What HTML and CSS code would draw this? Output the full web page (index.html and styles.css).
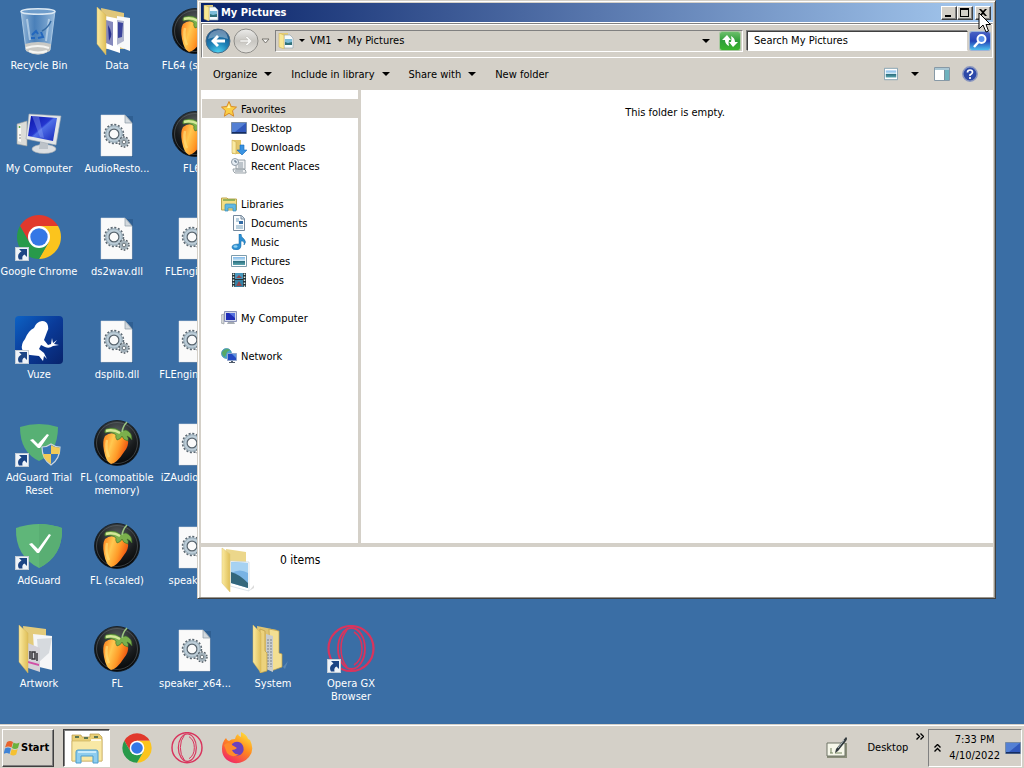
FILE: index.html
```html
<!DOCTYPE html>
<html lang="en">
<head>
<meta charset="utf-8">
<title>My Pictures</title>
<link rel="stylesheet" href="styles.css">
</head>
<body>
<svg class="sprite" aria-hidden="true">
  <defs>
    <linearGradient id="g-folder" x1="0" x2="1"><stop offset="0" stop-color="#fbeaa0"/><stop offset="1" stop-color="#dfbf58"/></linearGradient>
    <linearGradient id="g-screen" x1="0" y1="0" x2="1" y2="1"><stop offset="0" stop-color="#0a12a8"/><stop offset=".45" stop-color="#2436cf"/><stop offset=".5" stop-color="#4f6fe8"/><stop offset="1" stop-color="#1424b8"/></linearGradient>
    <linearGradient id="g-glass" x1="0" x2="1"><stop offset="0" stop-color="#b9d3ea" stop-opacity=".75"/><stop offset=".4" stop-color="#5a92cd" stop-opacity=".5"/><stop offset="1" stop-color="#b9d6ef" stop-opacity=".75"/></linearGradient>
    <radialGradient id="g-black" cx=".5" cy=".25" r=".75"><stop offset="0" stop-color="#555b5e"/><stop offset=".6" stop-color="#191c1e"/><stop offset="1" stop-color="#050607"/></radialGradient>
    <linearGradient id="g-mango" x1="0" y1="0" x2="1" y2=".4"><stop offset="0" stop-color="#ff7a18"/><stop offset=".4" stop-color="#ffc850"/><stop offset=".7" stop-color="#ff9a28"/><stop offset="1" stop-color="#ee5410"/></linearGradient>
    <linearGradient id="g-vuze" x1="0" y1="0" x2="1" y2="1"><stop offset="0" stop-color="#0d62c4"/><stop offset=".5" stop-color="#0a3a98"/><stop offset="1" stop-color="#08246c"/></linearGradient>
    <linearGradient id="g-fox" x1=".8" y1="0" x2=".2" y2="1"><stop offset="0" stop-color="#ffe23c"/><stop offset=".45" stop-color="#ff8a1e"/><stop offset="1" stop-color="#f0206a"/></linearGradient>
    <linearGradient id="g-pic" x1="0" y1="0" x2="0" y2="1"><stop offset="0" stop-color="#7fb8ea"/><stop offset=".5" stop-color="#d8eef6"/><stop offset=".55" stop-color="#2d7080"/><stop offset="1" stop-color="#5ba6b0"/></linearGradient>
    <radialGradient id="g-back" cx=".5" cy="1" r=".9"><stop offset="0" stop-color="#4fd6f4"/><stop offset=".5" stop-color="#1d82b8"/><stop offset="1" stop-color="#174f86"/></radialGradient>
    <linearGradient id="g-fwd" x1="0" y1="0" x2="0" y2="1"><stop offset="0" stop-color="#ececea"/><stop offset=".5" stop-color="#c8c6c1"/><stop offset="1" stop-color="#e6e4df"/></linearGradient>
  </defs>
  <symbol id="shortcut" viewBox="0 0 14 14">
    <rect width="14" height="14" fill="#eef3f8"/><rect x=".5" y=".5" width="13" height="13" fill="none" stroke="#c2ccd6"/>
    <path d="M4 2h8v8L9.500 7.500C7.500 8.500 7 10 7.500 12.500H4C2 9 3.500 6 6.500 4.500z" fill="#1c4584"/>
  </symbol>
  <symbol id="bin" viewBox="0 0 48 48">
    <path d="M6 4l5 39q12 8 24 0l5-39z" fill="url(#g-glass)" stroke="#a9c8e4"/>
    <path d="M10 37l1 7q12 7 24 0l1-7q-13-4-26 0z" fill="#c9c9c5"/><path d="M11 41q12-4 23 0M14 44q9 3 18 0" stroke="#f5f5f2" stroke-width="2" fill="none"/>
    <ellipse cx="23" cy="4.500" rx="17" ry="2.800" fill="#6f9dcb" stroke="#dbe8f3" stroke-width="1.500"/>
    <path d="M17 28l4-4 2 3M26 25l2 5-5 1M20 31h-4" fill="none" stroke="#2367bd" stroke-width="2"/>
    <path d="M12 12l3 21M34 12l-3 22" stroke="#d3e5f4" stroke-width="2" opacity=".6"/><path d="M27 24q6-3 9-10" stroke="#356ba4" fill="none" stroke-width="1.500"/>
  </symbol>
  <symbol id="folder-data" viewBox="0 0 48 48">
    <path d="M8 1l23 5v36H12z" fill="#dfc67a"/><path d="M12 9l15 3v34l-15-5z" fill="#fff"/><path d="M13 13l7 2v24l-7-3z" fill="#8589bd"/><path d="M15 18q6 9 1 16z" fill="#27308e"/>
    <path d="M24 9l13 2v33l-13-5z" fill="#f8f9fa"/><path d="M24 13l7 1v20l-7 4z" fill="#b2b7cf"/><path d="M25 15l5 1-1 14-4 1z" fill="#3b449c"/><path d="M4 0l9 8v40l-9-11z" fill="url(#g-folder)" stroke="#d4b65c" stroke-width=".5"/>
  </symbol>
  <symbol id="folder-art" viewBox="0 0 48 48">
    <path d="M8 1l23 3v38H12z" fill="#e3cb7b"/><path d="M18 9l19 2v34l-17-4z" fill="#f5f6f7"/><path d="M22 14l15-1-3 15-10 9z" fill="#d6dade"/>
    <path d="M13 18l12 5v24l-12-4z" fill="#d5d2d8"/><path d="M15 26v8M17 27h3v7h-3zM22 28v8" stroke="#38343a" stroke-width="1.500" fill="none"/><path d="M13 36l11 3v2l-11-3z" fill="#d14fa6"/>
    <path d="M4 0l9 8v40l-9-11z" fill="url(#g-folder)" stroke="#d4b65c" stroke-width=".5"/>
  </symbol>
  <symbol id="folder-sys" viewBox="0 0 48 48">
    <path d="M8 1l20 4v36H10z" fill="#dfc573"/><path d="M20 4l10 2v22l3 1v13l-11 4z" fill="#f3df92" stroke="#bfa04a" stroke-width=".7"/><path d="M17 9l7 2v36l-7-3z" fill="#c8ccce"/><path d="M19 14v28M22 14v28" stroke="#78828e" stroke-dasharray="2 1"/>
    <path d="M11 4l5 2v20l2 2v18l-7 2z" fill="#ecd27c" stroke="#bb9c46" stroke-width=".7"/><path d="M4 0l8 8v40l-8-11z" fill="url(#g-folder)" stroke="#d4b65c" stroke-width=".5"/><path d="M34 42l5-6-3 8z" fill="#77a0c6" opacity=".5"/>
  </symbol>
  <symbol id="computer" viewBox="0 0 48 48">
    <path d="M2 14l10-3v25L2 34z" fill="#dcdcd8" stroke="#9b9d9c" stroke-width=".6"/><path d="M3 16l3-1v17l-3-1z" fill="#f8f8f5"/><circle cx="4.500" cy="17" r="1" fill="#54a03c"/><path d="M4 25h2M4 28h2" stroke="#888"/>
    <ellipse cx="29" cy="39" rx="12" ry="4.500" fill="#dcdfe2" stroke="#a3a9af" stroke-width=".6"/><path d="M25 32h8v7h-9z" fill="#bdc3c9"/>
    <path d="M14 4l32 2-5 29-30-6z" fill="#e3e6e8" stroke="#a0a8b0" stroke-width=".6"/><path d="M16 6l26 2-4 23-25-5z" fill="url(#g-screen)"/><path d="M17 6l7 1 5 21-4-1z" fill="#8ba4f2" opacity=".4"/>
  </symbol>
  <symbol id="dll" viewBox="0 0 48 48">
    <path d="M9 6h31v41H9z" fill="#1e4670" opacity=".35"/><path d="M8 5h24l7 8v33H8z" fill="#fafafa" stroke="#dde2e6" stroke-width=".5"/><path d="M32 5v8h7z" fill="#d3d9de" stroke="#8b98a4" stroke-width=".7"/>
    <g fill="none"><circle cx="21" cy="24" r="9" stroke="#5d6973" stroke-width="2.500" stroke-dasharray="2 1.530"/><circle cx="21" cy="24" r="7" stroke="#bccdd8" stroke-width="3.500"/><circle cx="21" cy="24" r="4.900" stroke="#56636d" stroke-width="1.200"/><circle cx="21" cy="24" r="8.200" stroke="#8a9da9" stroke-width=".7"/>
    <circle cx="31" cy="32" r="4.700" stroke="#4b555d" stroke-width="2" stroke-dasharray="1.600 1.350"/><circle cx="31" cy="32" r="3.200" stroke="#a4b2bb" stroke-width="2.600"/><circle cx="31" cy="32" r="1.800" stroke="#4e5961" stroke-width=".8"/></g>
  </symbol>
  <symbol id="chrome" viewBox="0 0 48 48">
    <path d="M4.950 13A22 22 0 0 1 43.050 13H24v11l-9.530 5.500z" fill="#e1392c"/>
    <path d="M4.950 13A22 22 0 0 1 43.050 13H24v11l-9.530 5.500z" fill="#fbc41d" transform="rotate(120 24 24)"/>
    <path d="M4.950 13A22 22 0 0 1 43.050 13H24v11l-9.530 5.500z" fill="#289a4a" transform="rotate(240 24 24)"/>
    <circle cx="24" cy="24" r="11" fill="#fff"/><circle cx="24" cy="24" r="8.700" fill="#3477e6"/>
  </symbol>
  <symbol id="vuze" viewBox="0 0 48 48">
    <rect width="48" height="48" rx="4" fill="url(#g-vuze)"/>
    <path d="M19 12q2-6 8-7 5 0 6 5 1 3-1 6l-3 8 4 5 3-1 1-6 1 5 4-3-3 4 5 1-6 1q-4 3-8 1l-4-2-2 4 5 4 3 6-3-3-1 5-4-5-9-1q-6-1-8-6-1-5 3-10 3-8 9-11z" fill="#fff"/>
  </symbol>
  <symbol id="fl" viewBox="0 0 48 48">
    <circle cx="24" cy="24" r="22.500" fill="url(#g-black)" stroke="#10161a" stroke-width=".8"/><circle cx="24" cy="24" r="20.500" fill="none" stroke="#6a7276" stroke-width=".7" opacity=".7"/>
    <path d="M12 17q6-5 13-1 8-2 10 5 1 6-4 12-7 11-13 12-5-2-7-13-2-10 1-15z" fill="url(#g-mango)"/><path d="M14 21q-2 9 2 17" stroke="#ffdc75" stroke-width="2.500" fill="none" opacity=".7"/>
    <path d="M28 13Q22 7 13 10q-2 2-1 4 7-2 11 2-1 2 1 5 4-1 5-4 1 4 6 5 1-3-1-5 3 1 5 4 0-8-6-10-3 0-5 2z" fill="#7bb04c" stroke="#3d6b2a" stroke-width=".6"/>
    <path d="M13 12q7-2 14 2" stroke="#d5e89a" stroke-width="2.500" fill="none"/><path d="M29 13q1-6 5-10" fill="none" stroke="#9ac580" stroke-width="1.600"/>
  </symbol>
  <symbol id="adguard" viewBox="0 0 48 48">
    <path d="M24 2Q35 2 47 6q1 28-23 40Q0 34 1 6 13 2 24 2z" fill="#5fb679"/><path d="M24 2Q35 2 47 6q1 28-23 40z" fill="#59ae73"/><path d="M14 22l3-1 6 6L34 12l2 1-12 18h-2z" fill="#fff"/>
  </symbol>
  <symbol id="adguard-reset" viewBox="0 0 48 48">
    <path d="M24 5q10 0 19 3 0 25-19 34Q5 33 5 8q9-3 19-3z" fill="#57b074"/><path d="M15 21l3-1 5 5 9-10 2 1-9 13h-2z" fill="#fff"/>
    <path d="M36 25q4 3 9 3 0 12-9 18-9-6-9-18 5 0 9-3z" fill="#3a76b8" stroke="#ced7e0" stroke-width="1.200"/><path d="M36 26v9h8.500q.5-4 .2-6.500-5 0-8.700-2.500zM36 35h-8q1 6 8 10z" fill="#f3ca57"/>
  </symbol>
  <symbol id="opera" viewBox="0 0 48 48">
    <g fill="none" stroke="#d9345d"><circle cx="24" cy="23.500" r="22.500" stroke-width="2.200"/><ellipse cx="24.500" cy="23.500" rx="13.500" ry="20.500" stroke-width="1.800"/><path d="M27 7q8 5 8 16.500T27 40" stroke-width="1.500"/><path d="M20 5q-6 7-6 18.500T20 42" stroke-width="1.500"/></g>
  </symbol>
  <symbol id="firefox" viewBox="0 0 32 32">
    <path d="M5 6q1 3 3 3 2-2 6-2 0-3 3-5 0 2 3 3V0q6 3 7 7l2 1q5 10-1 17-6 7-15 6Q1 28 1 17 1 10 5 6z" fill="url(#g-fox)"/><path d="M11 12q4-4 9-1 4 4 2 9-3 5-8 3-4-2-4-6l5-1-4-2z" fill="#6b42bd"/><path d="M3 13q4-4 8 0l5 3q-2 2-5 2 2 5 7 4-7 5-12-1z" fill="#ff8b2a"/>
  </symbol>
  <symbol id="explorer" viewBox="0 0 32 32">
    <path d="M1 6V3h9l1 2h8V2h9l3 3v24H1z" fill="#e9cf77" stroke="#b89a48" stroke-width=".7"/><path d="M4 5h4M13 6h4M23 5h4" stroke="#5b7551" stroke-width="2" fill="none"/><path d="M1 9h18l2-2h10v22H1z" fill="#f8e8a5" stroke="#ccb05c" stroke-width=".7"/><path d="M20 7h10v2H20z" fill="#fff" opacity=".8"/>
    <path d="M5 20q0-2 2-2h18q2 0 2 2v11h-5v-7H10v7H5z" fill="#8dcdef" stroke="#4b9ccc"/><path d="M7 20h18" stroke="#ddf4ff" stroke-width="1.500"/>
  </symbol>
  <symbol id="pics" viewBox="0 0 16 16"><path d="M2 0h8v14H2z" fill="#e6cd73"/><path d="M6 2h6l3 3v10H6z" fill="#f6fafc" stroke="#99a9b1" stroke-width=".7"/><path d="M7 6h7v6H7z" fill="#7cbcd8"/><path d="M7 9l3 1 4-1v3H7z" fill="#2f7078"/><path d="M1 0l5 2v14l-5-2z" fill="#f9e895" stroke="#c8aa50" stroke-width=".5"/></symbol>
  <symbol id="star" viewBox="0 0 16 16"><path d="M8 .5l2.200 5 5.300.6-4 3.600 1.200 5.500L8 12.300l-4.700 2.900L4.500 9.700.5 6.100l5.300-.6z" fill="#fbcf45" stroke="#d88b28"/><path d="M8 3l1.500 4H6z" fill="#fff3ad"/></symbol>
  <symbol id="desk" viewBox="0 0 16 16"><path d="M.5 2.500h15v11H.5z" fill="#3158bb" stroke="#788ba4"/><path d="M1 3h14L4 12H1z" fill="#5480d4"/><path d="M1 12h14v1.500H1z" fill="#152d62"/></symbol>
  <symbol id="down" viewBox="0 0 16 16"><path d="M1 1h9v14H1z" fill="#e3c66a"/><path d="M1 1l4 2v12l-4-1z" fill="#faeaa1" stroke="#cbad54" stroke-width=".6"/><path d="M9 6h4v5h3l-5 5-5-5h3z" fill="#3a93e2" stroke="#196bba" stroke-width=".6"/></symbol>
  <symbol id="recent" viewBox="0 0 16 16"><path d="M5 2h9v9H5zM2 11h10q3 0 3 3v1H4q-2-1-2-4z" fill="#eef0f2" stroke="#8f989f" stroke-width=".9"/><path d="M7 5h5M7 7h5M7 9h5M4 13h8" stroke="#8b98a2"/><circle cx="4" cy="4" r="3.500" fill="#e6edf3" stroke="#909ba7"/><path d="M4 2v2h2" stroke="#53687c" fill="none"/></symbol>
  <symbol id="lib" viewBox="0 0 16 16"><path d="M.5 14V2H6l1 1h8.500v11z" fill="#f4df85" stroke="#bca650"/><path d="M2 4h12" stroke="#7ca34c" stroke-width="1.500"/><path d="M4 15V9q0-1 1-1h8q2 0 2 1v6h-3v-3H7v3z" fill="#61b8e2" stroke="#3a8cb8" stroke-width=".7"/></symbol>
  <symbol id="doc" viewBox="0 0 16 16"><path d="M2.500.5h8l3 3v12h-11z" fill="#fbfcfd" stroke="#75889b"/><path d="M10 .5V4h3.500" fill="#d7e0e8" stroke="#75889b"/><path d="M5 4h3M5 6h3M5 11h7M5 13h7" stroke="#75a0bc"/><path d="M8 6h4v3H8z" fill="#346ca5"/></symbol>
  <symbol id="music" viewBox="0 0 16 16"><path d="M8 0h2q0 3 3 5 3 3 0 6 1-4-3-4v5q0 3-4 4-5 0-5-3t7-3z" fill="#2c8fd2" stroke="#1768a4" stroke-width=".5"/><ellipse cx="4.500" cy="12.500" rx="2" ry="1.200" fill="#8fd0f2"/></symbol>
  <symbol id="picture" viewBox="0 0 16 16"><path d="M.5 2.500h15v11H.5z" fill="#fff" stroke="#7c9cad"/><path d="M2 4h12v8H2z" fill="url(#g-pic)"/></symbol>
  <symbol id="video" viewBox="0 0 16 16"><path d="M1 1h14v14H1z" fill="#263238"/><path d="M4 1h8v6H4z" fill="#4998be"/><path d="M4 8h8v7H4z" fill="#3482a6"/><path d="M8 3l3 3H5zM8 9l3 5H5z" fill="#93474d"/><path d="M2.500 1.500v14M13.500 1.500v14" stroke="#d6eee9" stroke-width="1.500" stroke-dasharray="1.500 1.500"/></symbol>
  <symbol id="pc" viewBox="0 0 16 16"><path d="M0 5l3-1v10l-3-1z" fill="#d4d7da" stroke="#8b9197" stroke-width=".6"/><path d="M7 12h6l1 2H6z" fill="#a7adb4"/><path d="M3.500 1.500h12v10h-12z" fill="#d5daea" stroke="#8b93b8"/><path d="M5 3h9v7H5z" fill="#1e2cb8"/><path d="M8 3h6v5z" fill="#5370df"/></symbol>
  <symbol id="net" viewBox="0 0 16 16"><circle cx="5.500" cy="5.500" r="5" fill="#48a6cd" stroke="#2b7c9c" stroke-width=".6"/><path d="M1 4q4-5 8-2L6 4l-2 5Q1 8 1 4z" fill="#58a965"/><path d="M6.500 5.500h9v7h-9z" fill="#2349c2" stroke="#91a5cd"/><path d="M10 13h2v1h2v1H8v-1h2z" fill="#4e5a6a"/><path d="M11 6h4v4z" fill="#5a90e2"/></symbol>
</svg>

<main class="desktop">
  <div class="icons">
    <button class="item"><svg class="pic"><use href="#bin"/></svg><span>Recycle Bin</span></button>
    <button class="item"><svg class="pic"><use href="#computer"/></svg><span>My Computer</span></button>
    <button class="item"><svg class="pic"><use href="#chrome"/><use href="#shortcut" y="34" width="14" height="14"/></svg><span>Google Chrome</span></button>
    <button class="item"><svg class="pic"><use href="#vuze"/><use href="#shortcut" y="34" width="14" height="14"/></svg><span>Vuze</span></button>
    <button class="item"><svg class="pic"><use href="#adguard-reset"/><use href="#shortcut" y="34" width="14" height="14"/></svg><span>AdGuard Trial Reset</span></button>
    <button class="item"><svg class="pic"><use href="#adguard"/><use href="#shortcut" y="34" width="14" height="14"/></svg><span>AdGuard</span></button>
    <button class="item"><svg class="pic"><use href="#folder-art"/></svg><span>Artwork</span></button>
    <button class="item"><svg class="pic"><use href="#folder-data"/></svg><span>Data</span></button>
    <button class="item"><svg class="pic"><use href="#dll"/></svg><span>AudioResto...</span></button>
    <button class="item"><svg class="pic"><use href="#dll"/></svg><span>ds2wav.dll</span></button>
    <button class="item"><svg class="pic"><use href="#dll"/></svg><span>dsplib.dll</span></button>
    <button class="item"><svg class="pic"><use href="#fl"/></svg><span>FL (compatible memory)</span></button>
    <button class="item"><svg class="pic"><use href="#fl"/></svg><span>FL (scaled)</span></button>
    <button class="item"><svg class="pic"><use href="#fl"/></svg><span>FL</span></button>
    <button class="item"><svg class="pic"><use href="#fl"/></svg><span>FL64 (scaled)</span></button>
    <button class="item"><svg class="pic"><use href="#fl"/></svg><span>FL64</span></button>
    <button class="item"><svg class="pic"><use href="#dll"/></svg><span>FLEngine.dll</span></button>
    <button class="item"><svg class="pic"><use href="#dll"/></svg><span>FLEngine_x6...</span></button>
    <button class="item"><svg class="pic"><use href="#dll"/></svg><span>iZAudioRest...</span></button>
    <button class="item"><svg class="pic"><use href="#dll"/></svg><span>speaker.dll</span></button>
    <button class="item"><svg class="pic"><use href="#dll"/></svg><span>speaker_x64...</span></button>
    <button class="item last-row"><svg class="pic"><use href="#folder-sys"/></svg><span>System</span></button>
    <button class="item last-row"><svg class="pic"><use href="#opera"/><use href="#shortcut" y="34" width="14" height="14"/></svg><span>Opera GX Browser</span></button>
  </div>

  <section class="window">
    <header class="titlebar">
      <svg class="i16"><use href="#pics"/></svg>
      <h1>My Pictures</h1>
      <button class="winbtn" aria-label="Minimize"><svg viewBox="0 0 12 10"><path d="M2 7h6v2H2z"/></svg></button>
      <button class="winbtn" aria-label="Maximize"><svg viewBox="0 0 12 10"><path d="M1 0h9v9H1zM2 2v6h7V2z" fill-rule="evenodd"/></svg></button>
      <button class="winbtn close" aria-label="Close"><svg viewBox="0 0 12 10"><path d="M2 1h2l2 2 2-2h2L7 4.500 10 8H8L6 6 4 8H2l3-3.500z"/></svg></button>
    </header>

    <div class="navbar">
      <button class="round" aria-label="Back"><svg viewBox="0 0 26 26"><circle cx="13" cy="13" r="12" fill="url(#g-back)" stroke="#4b6c86"/><path d="M3 11Q4 3 13 2t10 9q-10-4-20 0z" fill="#fff" opacity=".35"/><path d="M12 7l-6 6 6 6 2-2-2.500-2.500H20v-3h-8.500L14 9z" fill="#fff"/></svg></button>
      <button class="round" aria-label="Forward"><svg viewBox="0 0 26 26"><circle cx="13" cy="13" r="12" fill="url(#g-fwd)" stroke="#8f8e8a"/><path d="M14 8l5 5-5 5-1.500-1.500 2.500-2.500H7v-2h8L12.500 9.500z" fill="#f6f6f4" stroke="#b9b7b2" stroke-width=".5"/></svg></button>
      <button class="history" aria-label="Recent pages"><svg viewBox="0 0 9 6"><path d="M1 1h7L4.500 5z" fill="#f4f3f0" stroke="#77756f"/></svg></button>
      <div class="address">
        <svg class="i16"><use href="#pics"/></svg>
        <i class="small-arrow root"></i>
        <button class="crumb">VM1</button>
        <i class="small-arrow"></i>
        <button class="crumb">My Pictures</button>
        <button class="drop" aria-label="Previous locations"><i class="arrow"></i></button>
        <button class="refresh" aria-label="Refresh"><svg viewBox="0 0 20 18"><path d="M7 3L2 8h3q0 4 4 6-1-3 0-6h2zM13 15l5-5h-3q0-4-4-6 1 3 0 6H9z" fill="#fff"/></svg></button>
      </div>
      <input class="search" type="text" aria-label="Search My Pictures" value="Search My Pictures">
      <button class="go" aria-label="Search"><svg viewBox="0 0 20 18"><circle cx="11.500" cy="7" r="4" fill="#5b91e8" stroke="#fff" stroke-width="2"/><path d="M8.500 10L4 15" stroke="#fff" stroke-width="2.500"/></svg></button>
    </div>

    <nav class="toolbar">
      <button>Organize<i class="arrow"></i></button>
      <button>Include in library<i class="arrow"></i></button>
      <button>Share with<i class="arrow"></i></button>
      <button class="grow">New folder</button>
      <button class="view" aria-label="Change view"><svg class="i14" viewBox="0 0 16 16"><path d="M.5 1.500h15v13H.5z" fill="#fff" stroke="#7c9cad"/><path d="M2 4h12v8H2z" fill="url(#g-pic)"/></svg><i class="arrow"></i></button>
      <button aria-label="Preview pane"><svg class="i16" viewBox="0 0 16 16"><path d="M.5 1.500h15v13H.5z" fill="#fff" stroke="#8799a6"/><path d="M1 2h14v2H1z" fill="#aac7d4"/><path d="M11 4h4v10h-4z" fill="#6fb2be"/><path d="M10.500 4v10" stroke="#7c929e"/></svg></button>
      <button aria-label="Help"><svg class="i16" viewBox="0 0 16 16"><circle cx="8" cy="8" r="7.200" fill="#2c48a8" stroke="#8b97bf" stroke-width="1.500"/><path d="M5.500 6.500Q5.500 4 8 4t2.500 2.200Q10.500 7.500 8 9v1M8 11v2" fill="none" stroke="#fff" stroke-width="1.700"/></svg></button>
    </nav>

    <div class="body">
      <aside class="tree">
        <div class="group">
          <a class="head selected" href="#"><svg class="i16"><use href="#star"/></svg>Favorites</a>
          <a href="#"><svg class="i16"><use href="#desk"/></svg>Desktop</a>
          <a href="#"><svg class="i16"><use href="#down"/></svg>Downloads</a>
          <a href="#"><svg class="i16"><use href="#recent"/></svg>Recent Places</a>
        </div>
        <div class="group">
          <a class="head" href="#"><svg class="i16"><use href="#lib"/></svg>Libraries</a>
          <a href="#"><svg class="i16"><use href="#doc"/></svg>Documents</a>
          <a href="#"><svg class="i16"><use href="#music"/></svg>Music</a>
          <a href="#"><svg class="i16"><use href="#picture"/></svg>Pictures</a>
          <a href="#"><svg class="i16"><use href="#video"/></svg>Videos</a>
        </div>
        <div class="group"><a class="head" href="#"><svg class="i16"><use href="#pc"/></svg>My Computer</a></div>
        <div class="group"><a class="head" href="#"><svg class="i16"><use href="#net"/></svg>Network</a></div>
      </aside>
      <div class="files"><p>This folder is empty.</p></div>
    </div>

    <footer class="details">
      <svg class="thumb" viewBox="0 0 36 46"><path d="M6 2l20 3v33H8z" fill="#ecd78b"/><path d="M10 14l19 1v29l-19-5z" fill="#fff" stroke="#c3d2dc" stroke-width=".6"/><path d="M11 15l17 1v25l-17-5z" fill="#79b3e4"/><path d="M11 15l17 1v10q-8-5-17 0z" fill="#a7d2f2"/><path d="M11 25q8 2 17 11v5l-17-5z" fill="#33667b"/><path d="M29 44l5-6v3z" fill="#ddd"/><path d="M2 1l8 6v38l-8-9z" fill="url(#g-folder)" stroke="#e1c979" stroke-width=".6"/></svg>
      <p>0 items</p>
    </footer>
  </section>

  <svg class="cursor" viewBox="0 0 13 21"><path d="M1 1v16l4-4 3 7 2.500-1L8 12.500h4.500z" fill="#fff" stroke="#000"/></svg>
</main>

<footer class="taskbar">
  <button class="start"><svg viewBox="0 0 16 16"><path d="M3 2q3-2 6 0L7.500 7.500Q4 5.500 1 7.500z" fill="#e8632c"/><path d="M9.500 2.500q3 2 6 0L14 8q-3 2-6 0z" fill="#6bb23c"/><path d="M1 8.500q3-2 6 0L5.500 14q-3-2-6 0z" fill="#3f83d6"/><path d="M7.700 9q3 2 6 0l-1.500 5.500q-3 2-6 0z" fill="#f5c131"/></svg>Start</button>
  <button class="task active" aria-label="Windows Explorer"><svg><use href="#explorer"/></svg></button>
  <button class="task" aria-label="Google Chrome"><svg><use href="#chrome"/></svg></button>
  <button class="task" aria-label="Opera GX"><svg><use href="#opera"/></svg></button>
  <button class="task" aria-label="Firefox"><svg><use href="#firefox"/></svg></button>
  <button class="pen" aria-label="Input panel"><svg viewBox="0 0 22 22"><path d="M1 6h20v15H1z" fill="#8b8f7a"/><path d="M1 6h18v13H1z" fill="#f6f7ea" stroke="#6e7466"/><path d="M4 16h3M5 11v5M9 16h7" stroke="#75865f"/><path d="M20 0q2 1 0 4l-8 10-3 2 1-4z" fill="#30383c"/><path d="M18 3l-6 8" stroke="#b8c3c6"/></svg></button>
  <button class="deskband">Desktop</button>
  <button class="more" aria-label="More"><svg viewBox="0 0 8 7"><path d="M.5 .5l3 3-3 3M4.500 .5l3 3-3 3" fill="none" stroke="#000" stroke-width="1.400"/></svg></button>
  <div class="tray">
    <button aria-label="Show hidden icons"><svg class="up" viewBox="0 0 7 8"><path d="M.5 3.500l3-3 3 3M.5 7.500l3-3 3 3" fill="none" stroke="#000" stroke-width="1.400"/></svg></button>
    <time>7:33 PM<br>4/10/2022</time>
    <svg class="i16"><use href="#desk"/></svg>
  </div>
</footer>
</body>
</html>
```

FILE: styles.css
```css
* { box-sizing: border-box; }

body {
  margin: 0;
  height: 100vh;
  overflow: hidden;
  display: flex;
  flex-direction: column;
  background: #3a6ea5;
  color: #000;
  font: 11px/13px "DejaVu Sans Condensed", Tahoma, "DejaVu Sans", sans-serif;
}

button {
  margin: 0;
  padding: 0;
  border: 0;
  background: none;
  color: inherit;
  font: inherit;
}

svg { display: block; flex: none; }
p, h1 { margin: 0; }
.sprite { position: absolute; width: 0; height: 0; }
.i16 { width: 16px; height: 16px; }
.i14 { width: 14px; height: 14px; }

.arrow {
  display: block;
  border: 4px solid transparent;
  border-top-color: #000;
  border-bottom: 0;
}
.small-arrow {
  border: 3px solid transparent;
  border-top-color: #000;
  border-bottom: 0;
}

/* Desktop */
.desktop { position: relative; flex: 1; min-height: 0; }

.icons {
  display: grid;
  grid-auto-flow: column;
  grid-template-rows: repeat(7, 103px);
  grid-auto-columns: 78px;
}
.item {
  display: flex;
  flex-direction: column;
  align-items: center;
  gap: 4px;
  padding-top: 7px;
  color: #fff;
  text-align: center;
}
.last-row { grid-row: 7; }
.pic { width: 48px; height: 48px; }

/* Explorer window */
.window {
  position: absolute;
  top: 0;
  left: 197px;
  right: 28px;
  bottom: 125px;
  display: flex;
  flex-direction: column;
  padding: 2px 1px 1px 2px;
  background: #d4d0c8;
  border: 1px solid #d4d0c8;
  border-right-color: #404040;
  border-bottom-color: #404040;
  box-shadow: inset 1px 1px #fff, inset -1px -1px #9a978f;
}

.titlebar {
  display: flex;
  align-items: center;
  height: 19px;
  margin: 0 1px;
  padding: 0 2px;
  background: linear-gradient(90deg, #0a246a, #a6caf0);
  color: #fff;
}
.titlebar h1 { flex: 1; padding-left: 2px; font-size: 11px; line-height: 13px; }

.winbtn {
  width: 16px;
  height: 14px;
  padding: 1px;
  background: #d4d0c8;
  border: 1px solid;
  border-color: #fff #404040 #404040 #fff;
  box-shadow: inset -1px -1px #808080;
}
.winbtn svg { width: 12px; height: 10px; }
.close { margin-left: 2px; }

.navbar {
  display: flex;
  align-items: center;
  height: 35px;
  margin: 1px 1px 0;
  padding: 0 2px 0 3px;
  border: 1px solid;
  border-color: #808080 #fff #fff #808080;
  box-shadow: inset 1px 1px #fff, 0 -1px #fff;
}
.round { width: 26px; height: 26px; margin-right: 2px; }
.round svg { width: 26px; height: 26px; }
.history { width: 9px; margin-right: 5px; }
.history svg { width: 9px; height: 6px; }

.address {
  flex: 1;
  min-width: 0;
  display: flex;
  align-items: center;
  height: 22px;
  margin-right: 4px;
  padding: 0 2px;
  border: 1px solid;
  border-color: #808080 #fff #fff #808080;
}
.root { margin-left: 5px; }
.crumb { padding: 0 5px; white-space: nowrap; }
.drop { margin-left: auto; padding: 8px 10px; }
.refresh, .go {
  width: 20px;
  height: 18px;
  border-radius: 2px;
}
.refresh { background: linear-gradient(#6cbf6c, #2e9e38 50%, #38b52c); box-shadow: 0 0 0 1px #a8c8a0; }
.go { background: linear-gradient(#4a62c4, #2444b8 50%, #4cc0ee); box-shadow: 0 0 0 1px #9db4d8; }
.refresh svg, .go svg { width: 20px; height: 18px; }

.search {
  width: 221px;
  height: 20px;
  margin-right: 2px;
  padding: 0 6px;
  border: 1px solid;
  border-color: #404040 #d4d0c8 #fff #404040;
  box-shadow: -1px -1px #808080;
  border-radius: 0;
  outline: 0;
  background: #fff;
  color: #000;
  font: inherit;
}

.toolbar {
  display: flex;
  align-items: center;
  gap: 19px;
  height: 32px;
  padding: 0 16px 0 13px;
}
.toolbar button { display: flex; align-items: center; gap: 7px; white-space: nowrap; }
.toolbar .grow { margin-right: auto; }
.toolbar .view { gap: 13px; margin-right: -4px; }
.toolbar button:last-child { margin-left: -7px; }

.body { flex: 1; min-height: 0; display: flex; padding: 0 1px; }

.tree {
  width: 160px;
  padding: 9px 0 0 1px;
  background: #fff;
  border-right: 3px solid #d4d0c8;
}
.group { margin-bottom: 19px; }
.tree a {
  display: flex;
  align-items: center;
  gap: 4px;
  height: 19px;
  padding: 1px 0 0 29px;
  color: #000;
  text-decoration: none;
}
.tree .head { padding-left: 19px; }
.tree .selected { background: #d4d0c8; }

.files { flex: 1; padding: 16px 4px 0 0; background: #fff; text-align: center; }

.details {
  display: flex;
  gap: 24px;
  height: 54px;
  margin: 0 1px;
  padding: 0 19px;
  border-top: 4px solid #d4d0c8;
  background: #fff;
}
.thumb { width: 36px; height: 46px; }
.details p { padding-top: 6px; font-size: 12px; line-height: 14px; }

.cursor { position: absolute; top: 12px; right: 33px; width: 13px; height: 21px; }

/* Taskbar */
.taskbar {
  display: flex;
  align-items: center;
  height: 44px;
  padding: 2px 2px 0;
  background: #d4d0c8;
  border-top: 1px solid #d4d0c8;
  box-shadow: inset 0 1px #fff;
}
.start {
  display: flex;
  align-items: center;
  gap: 1px;
  width: 52px;
  height: 38px;
  margin-right: 9px;
  padding-left: 1px;
  border: 1px solid;
  border-color: #fff #404040 #404040 #fff;
  box-shadow: inset -1px -1px #808080;
  font-weight: bold;
}
.start svg { width: 16px; height: 16px; }
.task {
  display: flex;
  align-items: center;
  justify-content: center;
  width: 47px;
  height: 38px;
  margin-right: 3px;
}
.task svg { width: 32px; height: 32px; }
.active {
  background: #fff;
  border: 1px solid;
  border-color: #404040 #fff #fff #404040;
  box-shadow: inset 1px 1px #808080;
}
.pen { margin-left: auto; }
.pen svg { width: 22px; height: 22px; }
.deskband { margin-left: 19px; }
.more { align-self: flex-start; padding: 6px 0; margin: 0 4px 0 8px; }
.more svg { width: 8px; height: 7px; }
.tray {
  display: flex;
  align-items: center;
  gap: 8px;
  height: 38px;
  padding: 0 0 0 5px;
  border: 1px solid;
  border-color: #808080 #fff #fff #808080;
}
.up { width: 7px; height: 8px; }
.tray time { line-height: 16px; text-align: center; }
.tray .i16 { margin-left: -3px; }
```
